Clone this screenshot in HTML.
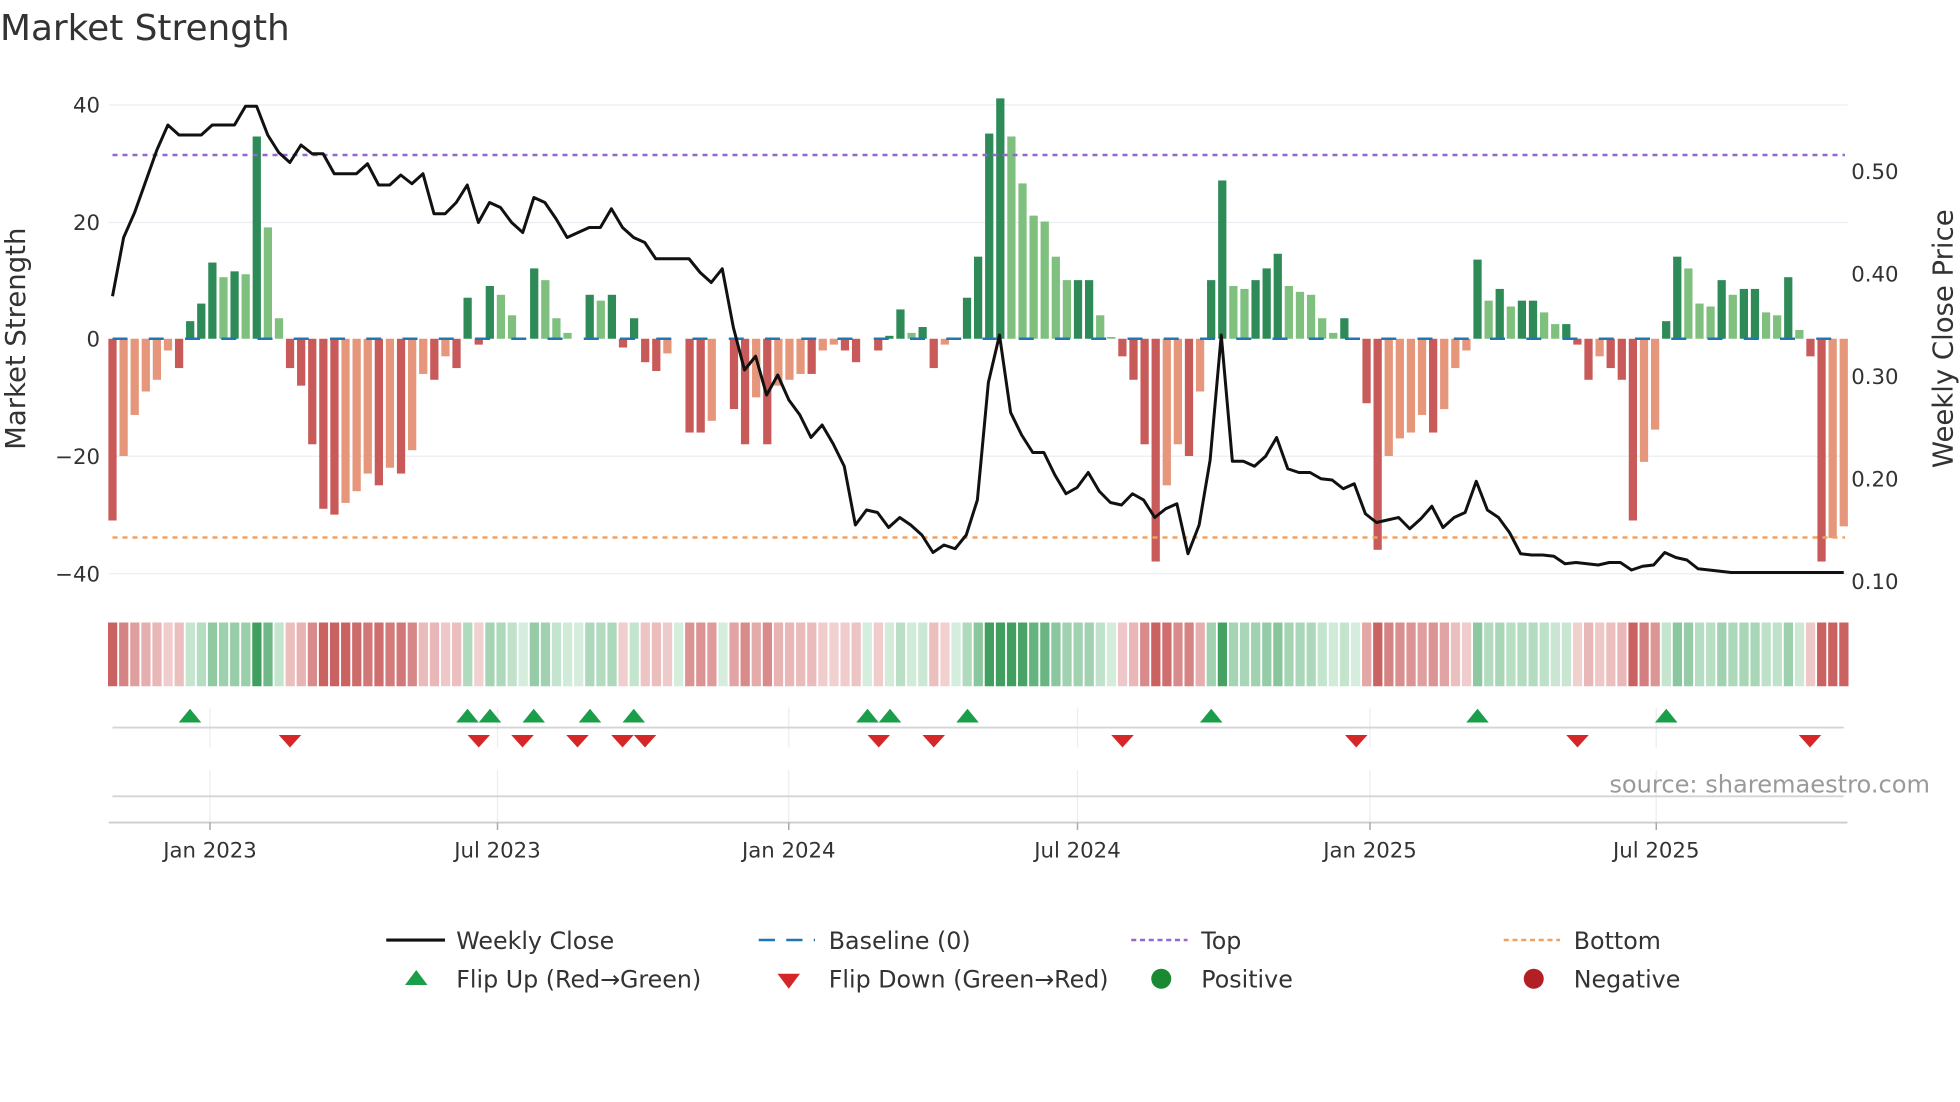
<!DOCTYPE html>
<html><head><meta charset="utf-8"><style>
html,body{margin:0;padding:0;background:#fff;width:1960px;height:1102px;overflow:hidden}
svg{display:block}
text{font-family:"DejaVu Sans","Liberation Sans",sans-serif;fill:#333}
</style></head><body>
<svg id="s" width="1960" height="1102" viewBox="0 0 1568 881.6" xmlns="http://www.w3.org/2000/svg">
<rect width="1568" height="882" fill="#fff"/>
<text x="0" y="32" font-size="28.7" fill="#333">Market Strength</text>
<g stroke="#ecedf2" stroke-width="1">
<line x1="87" y1="84" x2="1478" y2="84"/><line x1="87" y1="178" x2="1478" y2="178"/>
<line x1="87" y1="365" x2="1478" y2="365"/><line x1="87" y1="459" x2="1478" y2="459"/>
</g>
<g id="bars"></g>
<line x1="90" y1="124" x2="1476" y2="124" stroke="#9467d4" stroke-width="2" stroke-dasharray="4 4"/>
<line x1="90" y1="430" x2="1476" y2="430" stroke="#f0a060" stroke-width="2" stroke-dasharray="4 4"/>
<line x1="90" y1="271" x2="1476" y2="271" stroke="#1f77b4" stroke-width="2" stroke-dasharray="12 17"/>
<polyline id="price" fill="none" stroke="#111" stroke-width="2.4" stroke-linejoin="round"/>
<g font-size="17" text-anchor="end">
<text x="80" y="90">40</text><text x="80" y="184">20</text><text x="80" y="277">0</text>
<text x="80" y="371">−20</text><text x="80" y="465">−40</text>
</g>
<g font-size="17">
<text x="1481" y="143">0.50</text><text x="1481" y="225">0.40</text><text x="1481" y="307">0.30</text>
<text x="1481" y="389">0.20</text><text x="1481" y="471">0.10</text>
</g>
<text transform="translate(20,271) rotate(-90)" text-anchor="middle" font-size="22">Market Strength</text>
<text transform="translate(1562,271) rotate(-90)" text-anchor="middle" font-size="22">Weekly Close Price</text>
<g id="strip"></g>
<g stroke="#eceef2" stroke-width="1">
<line x1="168" y1="566" x2="168" y2="598"/><line x1="398" y1="566" x2="398" y2="598"/><line x1="631" y1="566" x2="631" y2="598"/><line x1="862" y1="566" x2="862" y2="598"/><line x1="1096" y1="566" x2="1096" y2="598"/><line x1="1325" y1="566" x2="1325" y2="598"/>
<line x1="168" y1="616" x2="168" y2="658"/><line x1="398" y1="616" x2="398" y2="658"/><line x1="631" y1="616" x2="631" y2="658"/><line x1="862" y1="616" x2="862" y2="658"/><line x1="1096" y1="616" x2="1096" y2="658"/><line x1="1325" y1="616" x2="1325" y2="658"/>
</g>
<line x1="90" y1="582" x2="1475" y2="582" stroke="#d4d4d8" stroke-width="1.5"/>
<line x1="90" y1="637" x2="1475" y2="637" stroke="#d4d4d8" stroke-width="1.5"/>
<line x1="87" y1="658" x2="1478" y2="658" stroke="#ccc" stroke-width="1.5"/>
<g stroke="#aaa" stroke-width="1.2">
<line x1="168" y1="658" x2="168" y2="664"/><line x1="398" y1="658" x2="398" y2="664"/><line x1="631" y1="658" x2="631" y2="664"/><line x1="862" y1="658" x2="862" y2="664"/><line x1="1096" y1="658" x2="1096" y2="664"/><line x1="1325" y1="658" x2="1325" y2="664"/>
</g>
<g id="flips"></g>
<text x="1544" y="634" font-size="19.3" text-anchor="end" style="fill:#9a9a9a">source: sharemaestro.com</text>
<g font-size="17" text-anchor="middle">
<text x="168" y="686">Jan 2023</text><text x="398" y="686">Jul 2023</text><text x="631" y="686">Jan 2024</text>
<text x="862" y="686">Jul 2024</text><text x="1096" y="686">Jan 2025</text><text x="1325" y="686">Jul 2025</text>
</g>
<g font-size="19">
<line x1="309" y1="752" x2="356" y2="752" stroke="#111" stroke-width="2.5"/>
<text x="365" y="759">Weekly Close</text>
<line x1="607" y1="752" x2="652" y2="752" stroke="#1f77b4" stroke-width="2" stroke-dasharray="13 9"/>
<text x="663" y="759">Baseline (0)</text>
<line x1="905" y1="752" x2="950" y2="752" stroke="#9467d4" stroke-width="2" stroke-dasharray="4 3"/>
<text x="961" y="759">Top</text>
<line x1="1203" y1="752" x2="1248" y2="752" stroke="#f0a060" stroke-width="2" stroke-dasharray="4 3"/>
<text x="1259" y="759">Bottom</text>
<polygon points="324,788 342,788 333,776" fill="#1a9e49"/>
<text x="365" y="790">Flip Up (Red→Green)</text>
<polygon points="622,779 640,779 631,791" fill="#d62728"/>
<text x="663" y="790">Flip Down (Green→Red)</text>
<circle cx="929" cy="783" r="8" fill="#1a8a32"/>
<text x="961" y="790">Positive</text>
<circle cx="1227" cy="783" r="8" fill="#b21f24"/>
<text x="1259" y="790">Negative</text>
</g>
</svg>
<script>
var V=[-31,-20,-13,-9,-7,-2,-5,3,6,13,10.5,11.5,11,34.5,19,3.5,-5,-8,-18,-29,-30,-28,-26,-23,-25,-22,-23,-19,-6,-7,-3,-5,7,-1,9,7.5,4,0,12,10,3.5,1,0,7.5,6.5,7.5,-1.5,3.5,-4,-5.5,-2.5,0,-16,-16,-14,0,-12,-18,-10,-18,-8,-7,-6,-6,-2,-1,-2,-4,0,-2,0.5,5,1,2,-5,-1,0,7,14,35,41,34.5,26.5,21,20,14,10,10,10,4,0.3,-3,-7,-18,-38,-25,-18,-20,-9,10,27,9,8.5,10,12,14.5,9,8,7.5,3.5,1,3.5,0,-11,-36,-20,-17,-16,-13,-16,-12,-5,-2,13.5,6.5,8.5,5.5,6.5,6.5,4.5,2.5,2.5,-1,-7,-3,-5,-7,-31,-21,-15.5,3,14,12,6,5.5,10,7.5,8.5,8.5,4.5,4,10.5,1.5,-3,-38,-34,-32];
var P=[237,190,170,145,120,100,108,108,108,100,100,100,85,85,108,122,130,116,123,123,139,139,139,131,148,148,140,147,139,171,171,162,148,178,162,166,178,186,158,162,175,190,186,182,182,167,182,190,194,207,207,207,207,218,226,215,262,296,285,316,300,320,332,350,340,355,373,420,408,410,422,414,420,428,442,436,439,428,400,306,268,330,348,362,362,380,395,390,378,393,402,404,395,400,414,407,403,443,420,368,268,369,369,373,365,350,375,378,378,383,384,391,387,411,418,416,414,423,415,405,422,414,410,385,408,414,426,443,444,444,445,451,450,451,452,450,450,456,453,452,442,446,448,455,456,457,458,458,458,458,458,458,458,458,458,458,458,458];
var N=V.length,step=(1475-90)/(N-1),ns="http://www.w3.org/2000/svg";
function el(t,a,p){var e=document.createElementNS(ns,t);for(var k in a)e.setAttribute(k,a[k]);document.getElementById(p).appendChild(e);return e;}
function mix(a,b,t){return "rgb("+a.map(function(v,i){return Math.round(v+(b[i]-v)*t)}).join(",")+")";}
var pts=[];
for(var i=0;i<N;i++){
 var x=90+i*step,v=V[i],prev=i?V[i-1]:0,dark=Math.abs(v)>=Math.abs(prev)||(v*prev<=0);
 if(v!==0){var h=Math.abs(v)*4.69;
  var c=v>0?(dark?"#2e8b57":"#80c07f"):(dark?"#c95a5a":"#e6967a");
  el("rect",{x:x-3.3,y:v>0?271-h:271,width:6.6,height:h,fill:c},"bars");}
 var t=Math.min(1,Math.abs(v)/28);
 var col=v>=0?mix([222,242,228],[46,150,80],t*0.85+0.05):mix([245,218,218],[200,92,92],t*0.9+0.05);
 el("rect",{x:x-3.6,y:498,width:7.4,height:51,fill:col},"strip");
}
for(var j=0;j<P.length;j++){var px=90+j*8.87;if(px>1476)break;pts.push(px.toFixed(1)+","+P[j]);}
pts.push("1475,458");
document.getElementById("price").setAttribute("points",pts.join(" "));
[152,374,392,427,472,507,694,712,774,969,1182,1333].forEach(function(x){el("polygon",{points:(x-9)+",578 "+(x+9)+",578 "+x+",567",fill:"#1a9e49"},"flips");});
[232,383,418,462,498,516,703,747,898,1085,1262,1448].forEach(function(x){el("polygon",{points:(x-9)+",588 "+(x+9)+",588 "+x+",598",fill:"#d62728"},"flips");});
</script>
</body></html>
